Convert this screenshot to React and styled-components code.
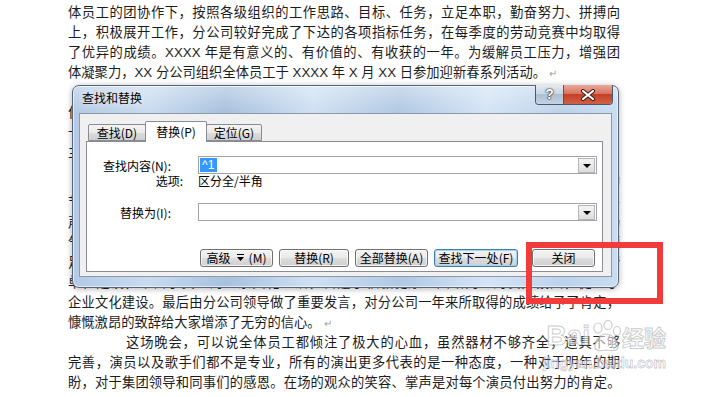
import React from 'react';
import styled, { createGlobalStyle } from 'styled-components';

const GlobalStyle = createGlobalStyle`
    html, body {
        margin: 0;
        padding: 0;
        background: #fff;
    }
`;

const docLines = [
    { text: '体员工的团协作下，按照各级组织的工作思路、目标、任务，立足本职，勤奋努力、拼搏向', full: true },
    { text: '上，积极展开工作，分公司较好完成了下达的各项指标任务，在每季度的劳动竞赛中均取得', full: true },
    { text: '了优异的成绩。XXXX 年是有意义的、有价值的、有收获的一年。为缓解员工压力，增强团', full: true },
    { text: '体凝聚力，XX 分公司组织全体员工于 XXXX 年 X 月 XX 日参加迎新春系列活动。', mark: true },
    { text: '活动当天上午，公司在体育馆举办了趣味运动会，各部门踊跃报名，', indent: true },
    { text: '位同事在比赛中展现出顽强拼搏、团结协作的精神，赛场上加油声此起彼伏，气氛热烈。', full: true },
    { text: '一场场精彩的比赛不仅锻炼了大家的身体，也进一步增进了各部门之间的友谊与了解。', full: true },
    { text: '主办方为获奖的团队和个人颁发了奖品。', mark: true },
    { text: '晚上，分公司在酒店举办了迎新春联欢晚会，员工们自编自演了丰富多彩的', indent: true, full: true, gap: 10 },
    { text: '节目，有歌曲、舞蹈、小品、相声、诗朗诵等，充分展示了员工们积极向上的精神风貌和多', full: true },
    { text: '声部合唱《春天的故事》赢得了全场热烈的掌声，晚会还穿插了幸运抽奖环节，将现场', full: true },
    { text: '气氛一次次推向高潮。整场晚会洋溢着欢乐、祥和的节日气氛，大家欢聚一堂，共同回顾', full: true },
    { text: '足迹，展望未来，进一步增强了员工的归属感和荣誉感，也有力地推动了分公司和谐', full: true },
    { text: '单位建设，丰富了员工的业余文化生活，营造了积极健康、团结向上的良好氛围，促进了', full: true },
    { text: '企业文化建设。最后由分公司领导做了重要发言，对分公司一年来所取得的成绩给予了肯定，', full: true },
    { text: '慷慨激昂的致辞给大家增添了无穷的信心。', mark: true },
    { text: '这场晚会，可以说全体员工都倾注了极大的心血，虽然器材不够齐全，道具不够', indent: true, full: true },
    { text: '完善，演员以及歌手们都不是专业，所有的演出更多代表的是一种态度，一种对于明年的期', full: true },
    { text: '盼，对于集团领导和同事们的感恩。在场的观众的笑容、掌声是对每个演员付出努力的肯定。', full: true, tight: true },
];

const buttons = [
    { label: '高级', key: 'M', width: 73, more: true },
    { label: '替换', key: 'R', width: 70 },
    { label: '全部替换', key: 'A', width: 73 },
    { label: '查找下一处', key: 'F', width: 84, primary: true },
    { label: '关闭', width: 63, apart: true },
];

const MoreArrow = () => (
    <svg width="7" height="8" viewBox="0 0 7 8">
        <rect x="0" y="0" width="7" height="1" fill="#000" />
        <path d="M0 3 H7 L3.5 7 Z" fill="#000" />
    </svg>
);

const App = () => {
    return (
        <Page>
            <GlobalStyle />
            <Doc>
                {docLines.map((line, i) => (
                    <Line key={i} $full={line.full} $indent={line.indent} $tight={line.tight} $gap={line.gap}>
                        {line.text}
                        {line.mark && <ParaMark>↵</ParaMark>}
                    </Line>
                ))}
            </Doc>

            <Watermark>
                <WmRow>
                    <WmBig>Bai</WmBig>
                    <svg width="30" height="32" viewBox="0 0 30 32">
                        <g fill="rgba(255,255,255,0.55)" stroke="rgba(170,170,170,0.6)" strokeWidth="1.2">
                            <ellipse cx="7" cy="8" rx="4" ry="5" />
                            <ellipse cx="17" cy="5" rx="4" ry="4.5" />
                            <ellipse cx="26" cy="11" rx="3.5" ry="4.5" />
                            <path d="M4 27 C4 19 10 14 15 14 C21 14 27 20 27 27 C27 31 22 31 15 30 C9 31 4 31 4 27 Z" />
                        </g>
                    </svg>
                    <WmBig $cjk>经验</WmBig>
                </WmRow>
                <WmSmall>jingyan.baidu.com</WmSmall>
            </Watermark>

            <Dialog>
                <TitleBar>
                    <Title>查找和替换</Title>
                    <Caption>
                        <HelpButton>?</HelpButton>
                        <CloseButton>
                            <svg width="16" height="12" viewBox="0 0 16 12">
                                <path d="M3 2 L13 10 M13 2 L3 10" stroke="#3a1a14" strokeWidth="4" strokeLinecap="round" />
                                <path d="M3 2 L13 10 M13 2 L3 10" stroke="#fff" strokeWidth="2.2" strokeLinecap="round" />
                            </svg>
                        </CloseButton>
                    </Caption>
                </TitleBar>

                <Client>
                    <TabStrip>
                        <Tab $width={58}>查找(D)</Tab>
                        <Tab $width={62} $active>替换(P)</Tab>
                        <Tab $width={56}>定位(G)</Tab>
                    </TabStrip>

                    <TabPanel>
                        <FormRow>
                            <Label>查找内容(N):</Label>
                            <Combo>
                                <Selected>^1</Selected>
                                <DropButton />
                            </Combo>
                        </FormRow>
                        <OptionRow>
                            <Label $pad={15}>选项:</Label>
                            <span>区分全/半角</span>
                        </OptionRow>
                        <FormRow $top={16}>
                            <Label $pad={27}>替换为(I):</Label>
                            <Combo>
                                <DropButton />
                            </Combo>
                        </FormRow>

                        <ButtonRow>
                            {buttons.map((b) => (
                                <Button key={b.label} $width={b.width} $primary={b.primary} $apart={b.apart}>
                                    {b.label}
                                    {b.more && <MoreGap><MoreArrow /></MoreGap>}
                                    {b.key && `(${b.key})`}
                                </Button>
                            ))}
                        </ButtonRow>
                    </TabPanel>
                </Client>
            </Dialog>

            <Highlight />
        </Page>
    );
};

const Page = styled.div`
    position: relative;
    width: 705px;
    height: 397px;
    overflow: hidden;
    background: #fff;
`;

const Doc = styled.div`
    width: 552px;
    padding: 3px 0 0 68px;
    font-family: "Liberation Sans", "Noto Sans CJK SC", sans-serif;
    font-size: 13.3px;
    line-height: 20px;
    color: #1c1c1c;
`;

const Line = styled.div`
    height: 20px;
    overflow: hidden;
    margin-top: ${(p) => p.$gap || 0}px;
    text-indent: ${(p) => (p.$indent ? '58px' : '0')};
    text-align: ${(p) => (p.$full ? 'justify' : 'left')};
    text-align-last: ${(p) => (p.$full ? 'justify' : 'left')};
    letter-spacing: ${(p) => (p.$tight ? '-0.45px' : '0')};
`;

const ParaMark = styled.span`
    margin-left: 3px;
    font-size: 10px;
    color: #a0a0a0;
`;

const Watermark = styled.div`
    position: absolute;
    left: 546px;
    top: 318px;
    display: flex;
    flex-direction: column;
    align-items: flex-end;
    width: 120px;
    pointer-events: none;
`;

const WmRow = styled.div`
    display: flex;
    align-items: center;
    gap: 1px;
`;

const WmBig = styled.span`
    font-family: ${(p) => (p.$cjk ? '"Noto Sans CJK SC", sans-serif' : '"Liberation Sans", sans-serif')};
    font-weight: bold;
    font-size: ${(p) => (p.$cjk ? 22 : 28)}px;
    line-height: 36px;
    color: rgba(255, 255, 255, 0.55);
    -webkit-text-stroke: 1px rgba(170, 170, 170, 0.6);
`;

const WmSmall = styled.span`
    font-family: "Liberation Sans", sans-serif;
    font-weight: bold;
    font-size: 14px;
    line-height: 18px;
    color: rgba(255, 255, 255, 0.55);
    -webkit-text-stroke: 0.8px rgba(170, 170, 170, 0.6);
`;

const Dialog = styled.div`
    position: absolute;
    left: 72px;
    top: 85px;
    width: 547px;
    height: 203px;
    box-sizing: border-box;
    display: flex;
    flex-direction: column;
    padding: 0 6px 10px 6px;
    border: 1px solid #566579;
    border-radius: 7px;
    background:
        linear-gradient(to bottom, rgba(255, 255, 255, 0.35), rgba(255, 255, 255, 0) 26px),
        linear-gradient(to right, #b3cae5 0%, #c9dbef 14%, #a8c1de 28%, #cfe0f2 44%, #b1c8e3 60%, #d4e4f5 76%, #bdd3eb 90%, #c9dcf0 100%);
    box-shadow: inset 0 0 0 1px rgba(255, 255, 255, 0.6), 0 1px 6px rgba(0, 0, 0, 0.3);
    font-family: "Noto Sans CJK SC", "Liberation Sans", sans-serif;
    font-size: 12px;
    color: #000;
`;

const TitleBar = styled.div`
    display: flex;
    justify-content: space-between;
    align-items: flex-start;
    height: 27px;
`;

const Title = styled.div`
    margin-left: 3px;
    line-height: 24px;
    text-shadow: 0 0 6px rgba(255, 255, 255, 0.9);
`;

const Caption = styled.div`
    display: flex;
    margin: -1px -1px 0 0;
    height: 19px;
    border: 1px solid #4a586b;
    border-top: none;
    border-radius: 0 0 4px 4px;
    overflow: hidden;
`;

const HelpButton = styled.div`
    width: 27px;
    border-right: 1px solid #4a586b;
    background: linear-gradient(to bottom, #e3eaf2 0%, #c9d6e3 45%, #aebfd1 50%, #c4d3e2 100%);
    font-family: "Liberation Sans", sans-serif;
    font-weight: bold;
    font-size: 14px;
    line-height: 19px;
    text-align: center;
    color: #fff;
    text-shadow: 0 0 1px #222, 0 0 1px #222, 0 0 2px #333;
`;

const CloseButton = styled.div`
    width: 48px;
    display: flex;
    align-items: center;
    justify-content: center;
    background: linear-gradient(to bottom, #e9a99b 0%, #d9745f 45%, #c2402c 50%, #d35f43 100%);
`;

const Client = styled.div`
    flex: 1;
    display: flex;
    flex-direction: column;
    padding: 7px 8px 4px 6px;
    border: 1px solid #8d99a8;
    background: #f0f0f0;
`;

const TabStrip = styled.div`
    display: flex;
    align-items: flex-end;
    height: 20px;
    padding-left: 2px;
    position: relative;
    z-index: 1;
`;

const Tab = styled.div`
    box-sizing: border-box;
    width: ${(p) => p.$width}px;
    height: ${(p) => (p.$active ? 21 : 17)}px;
    margin-bottom: ${(p) => (p.$active ? -1 : 0)}px;
    border: 1px solid #898c95;
    border-bottom: ${(p) => (p.$active ? 'none' : '1px solid #898c95')};
    border-radius: 2px 2px 0 0;
    background: ${(p) => (p.$active ? '#fff' : 'linear-gradient(to bottom, #f3f3f3 0%, #ebebeb 50%, #dddddd 51%, #cfcfcf 100%)')};
    line-height: ${(p) => (p.$active ? 19 : 15)}px;
    text-align: center;
    margin-left: ${(p) => (p.$active ? -1 : 0)}px;
    margin-right: ${(p) => (p.$active ? -1 : 0)}px;
    padding: ${(p) => (p.$active ? '0 1px' : 0)};
`;

const TabPanel = styled.div`
    flex: 1;
    display: flex;
    flex-direction: column;
    padding: 14px 5px 0 0;
    border: 1px solid #898c95;
    background: #fff;
`;

const FormRow = styled.div`
    display: grid;
    grid-template-columns: 111px 1fr;
    align-items: center;
    height: 18px;
    margin-top: ${(p) => p.$top || 0}px;
`;

const OptionRow = styled.div`
    display: grid;
    grid-template-columns: 111px 1fr;
    align-items: center;
    height: 13px;
    line-height: 13px;
`;

const Label = styled.span`
    text-align: right;
    padding-right: ${(p) => p.$pad || 27}px;
    white-space: nowrap;
`;

const Combo = styled.div`
    position: relative;
    box-sizing: border-box;
    height: 18px;
    display: flex;
    align-items: center;
    justify-content: space-between;
    padding: 0 1px;
    border: 1px solid #a3a3a3;
    background: #fff;
`;

const Selected = styled.span`
    padding: 0 3px 0 2px;
    height: 14px;
    line-height: 14px;
    background: #3399ff;
    color: #fff;
    font-family: "Liberation Sans", sans-serif;
`;

const DropButton = styled.div`
    margin-left: auto;
    box-sizing: border-box;
    width: 17px;
    height: 15px;
    border: 1px solid #b5b5b5;
    background: linear-gradient(to bottom, #f5f5f5, #dcdcdc);
    position: relative;

    &::after {
        content: '';
        position: absolute;
        left: 4px;
        top: 5px;
        border-left: 4px solid transparent;
        border-right: 4px solid transparent;
        border-top: 4px solid #000;
    }
`;

const ButtonRow = styled.div`
    display: flex;
    gap: 6px;
    margin-top: 28px;
    padding-left: 113px;
`;

const Button = styled.div`
    box-sizing: border-box;
    width: ${(p) => p.$width}px;
    height: 18px;
    margin-left: ${(p) => (p.$apart ? 8 : 0)}px;
    display: flex;
    align-items: center;
    justify-content: center;
    border: 1px solid ${(p) => (p.$primary ? '#3c7fb1' : '#707070')};
    border-radius: 3px;
    background: linear-gradient(to bottom, #f2f2f2 0%, #ebebeb 48%, #dddddd 52%, #cfcfcf 100%);
    box-shadow: inset 0 0 0 1px ${(p) => (p.$primary ? '#9fd5f3' : 'rgba(255, 255, 255, 0.7)')};
    line-height: 16px;
    white-space: nowrap;
`;

const MoreGap = styled.span`
    display: inline-flex;
    margin: 0 5px 0 6px;
`;

const Highlight = styled.div`
    position: absolute;
    left: 526px;
    top: 242px;
    width: 137px;
    height: 62px;
    box-sizing: border-box;
    border: 6px solid #f23b3b;
`;

export default App;
